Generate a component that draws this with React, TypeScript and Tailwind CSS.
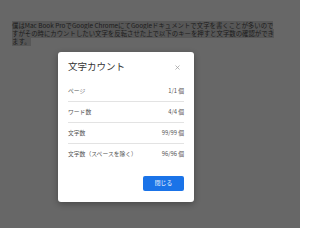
const ROWS = [
  { label: 'ページ', value: '1/1 個' },
  { label: 'ワード数', value: '4/4 個' },
  { label: '文字数', value: '99/99 個' },
  { label: '文字数（スペースを除く）', value: '96/96 個' },
];

const font = { fontFamily: '"Noto Sans CJK JP", "Liberation Sans", sans-serif' };

export default function App() {
  return (
    <div className="relative h-[228px] w-[300px] overflow-hidden bg-[#676767]" style={font}>
      {/* document text, selected */}
      <p className="pl-[12px] pt-[21.5px] text-[6.4px] leading-[8.35px] text-[#1c1c1c]">
        <span className="bg-[#575757]">僕はMac Book ProでGoogle ChromeにてGoogleドキュメントで文字を書くことが多いので</span>
        <br />
        <span className="bg-[#575757]">すがその時にカウントしたい文字を反転させた上で以下のキーを押すと文字数の確認ができ</span>
        <br />
        <span className="bg-[#575757]">ます。</span>
      </p>

      {/* word count dialog */}
      <div className="absolute left-[58px] top-[52px] flex h-[150px] w-[136px] flex-col rounded-[3px] bg-white px-[10px] pt-[8px] shadow-[0_2px_6px_rgba(0,0,0,0.3)]">
        <div className="flex h-[14px] items-center justify-between">
          <span className="text-[9.5px] leading-none text-[#333]">文字カウント</span>
          <svg width="5" height="5" viewBox="0 0 10 10" className="mr-[4.5px] text-[#9a9a9a]" aria-hidden>
            <path d="M1 1 L9 9 M9 1 L1 9" stroke="currentColor" strokeWidth="1.4" fill="none" />
          </svg>
        </div>
        <ul className="mt-[7px]">
          {ROWS.map((row, i) => (
            <li
              key={row.label}
              className={`flex h-[21px] items-center justify-between text-[5.8px] text-[#555] ${
                i < ROWS.length - 1 ? 'border-b border-[#e3e3e3]' : ''
              }`}
            >
              <span>{row.label}</span>
              <span>{row.value}</span>
            </li>
          ))}
        </ul>
        <div className="mt-auto mb-[11px] flex justify-end">
          <button
            type="button"
            className="flex h-[15px] w-[41px] items-center justify-center rounded-[2px] bg-[#1a73e8] text-[5.8px] text-white"
          >
            閉じる
          </button>
        </div>
      </div>
    </div>
  );
}
